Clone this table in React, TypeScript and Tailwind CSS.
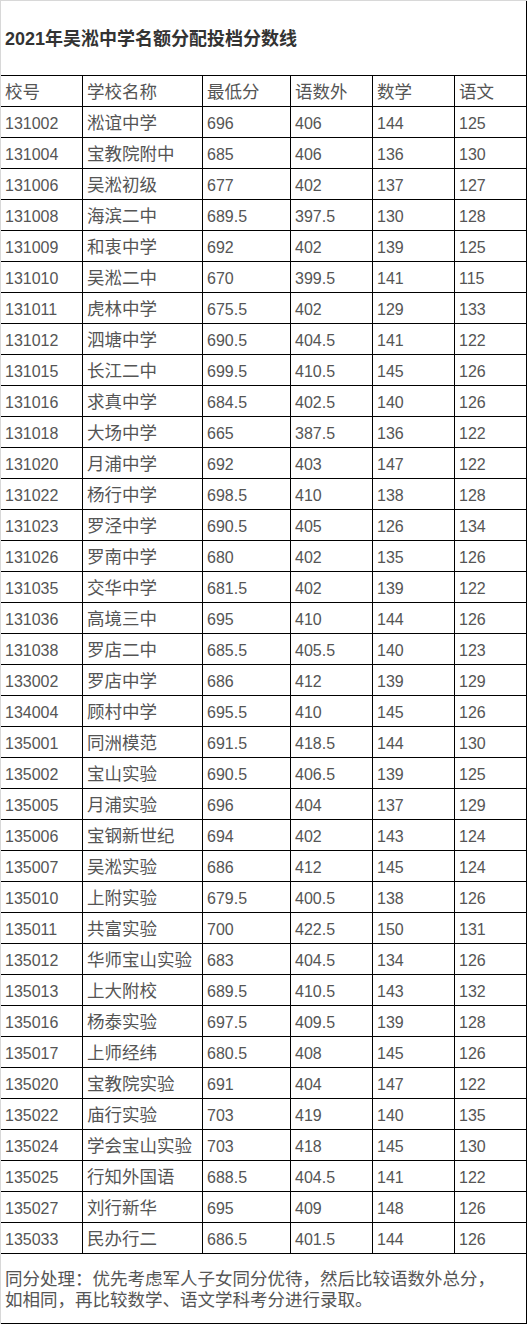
// 2021 Wusong admissions cut-off table (static snapshot)

const rows: [string, string, string, string, string, string][] = [
  ["131002", "淞谊中学", "696", "406", "144", "125"],
  ["131004", "宝教院附中", "685", "406", "136", "130"],
  ["131006", "吴淞初级", "677", "402", "137", "127"],
  ["131008", "海滨二中", "689.5", "397.5", "130", "128"],
  ["131009", "和衷中学", "692", "402", "139", "125"],
  ["131010", "吴淞二中", "670", "399.5", "141", "115"],
  ["131011", "虎林中学", "675.5", "402", "129", "133"],
  ["131012", "泗塘中学", "690.5", "404.5", "141", "122"],
  ["131015", "长江二中", "699.5", "410.5", "145", "126"],
  ["131016", "求真中学", "684.5", "402.5", "140", "126"],
  ["131018", "大场中学", "665", "387.5", "136", "122"],
  ["131020", "月浦中学", "692", "403", "147", "122"],
  ["131022", "杨行中学", "698.5", "410", "138", "128"],
  ["131023", "罗泾中学", "690.5", "405", "126", "134"],
  ["131026", "罗南中学", "680", "402", "135", "126"],
  ["131035", "交华中学", "681.5", "402", "139", "122"],
  ["131036", "高境三中", "695", "410", "144", "126"],
  ["131038", "罗店二中", "685.5", "405.5", "140", "123"],
  ["133002", "罗店中学", "686", "412", "139", "129"],
  ["134004", "顾村中学", "695.5", "410", "145", "126"],
  ["135001", "同洲模范", "691.5", "418.5", "144", "130"],
  ["135002", "宝山实验", "690.5", "406.5", "139", "125"],
  ["135005", "月浦实验", "696", "404", "137", "129"],
  ["135006", "宝钢新世纪", "694", "402", "143", "124"],
  ["135007", "吴淞实验", "686", "412", "145", "124"],
  ["135010", "上附实验", "679.5", "400.5", "138", "126"],
  ["135011", "共富实验", "700", "422.5", "150", "131"],
  ["135012", "华师宝山实验", "683", "404.5", "134", "126"],
  ["135013", "上大附校", "689.5", "410.5", "143", "132"],
  ["135016", "杨泰实验", "697.5", "409.5", "139", "128"],
  ["135017", "上师经纬", "680.5", "408", "145", "126"],
  ["135020", "宝教院实验", "691", "404", "147", "122"],
  ["135022", "庙行实验", "703", "419", "140", "135"],
  ["135024", "学会宝山实验", "703", "418", "145", "130"],
  ["135025", "行知外国语", "688.5", "404.5", "141", "122"],
  ["135027", "刘行新华", "695", "409", "148", "126"],
  ["135033", "民办行二", "686.5", "401.5", "144", "126"],
];

const widths = ["w-[82px]", "w-[120px]", "w-[88px]", "w-[82px]", "w-[82px]", "w-[72px]"];
const header = ["校号", "学校名称", "最低分", "语数外", "数学", "语文"];

const font = { fontFamily: '"Liberation Sans", "Noto Sans CJK SC", sans-serif' };

function Row({ cells, cjk }: { cells: string[]; cjk?: boolean }) {
  return (
    <div className="flex h-[31px] border-b border-black">
      {cells.map((c, i) => {
        const isText = cjk || i === 1;
        return (
          <div
            key={i}
            className={`${widths[i]} flex shrink-0 items-center border-r border-black pl-[4px] pt-[4px] leading-none ${
              isText ? "text-[17.5px]" : "text-[16px]"
            }`}
          >
            {c}
          </div>
        );
      })}
    </div>
  );
}

export default function App() {
  return (
    <div style={font} className="w-[528px] bg-white text-[#555]">
      <div className="w-[527px] border-l border-t border-[#d8d8d8]">
        <div className="flex h-[75px] items-center border-b border-r border-black pl-[4px] pt-[3px] text-[18px] font-bold text-[#333]">
          2021年吴淞中学名额分配投档分数线
        </div>
        <Row cells={header} cjk />
        {rows.map((r) => (
          <Row key={r[0]} cells={r} />
        ))}
        <div className="border-b border-r border-black pb-[12px] pl-[4px] pt-[15px] text-[17.5px] leading-[21px]">
          同分处理：优先考虑军人子女同分优待，然后比较语数外总分，
          <br />
          如相同，再比较数学、语文学科考分进行录取。
        </div>
      </div>
    </div>
  );
}
